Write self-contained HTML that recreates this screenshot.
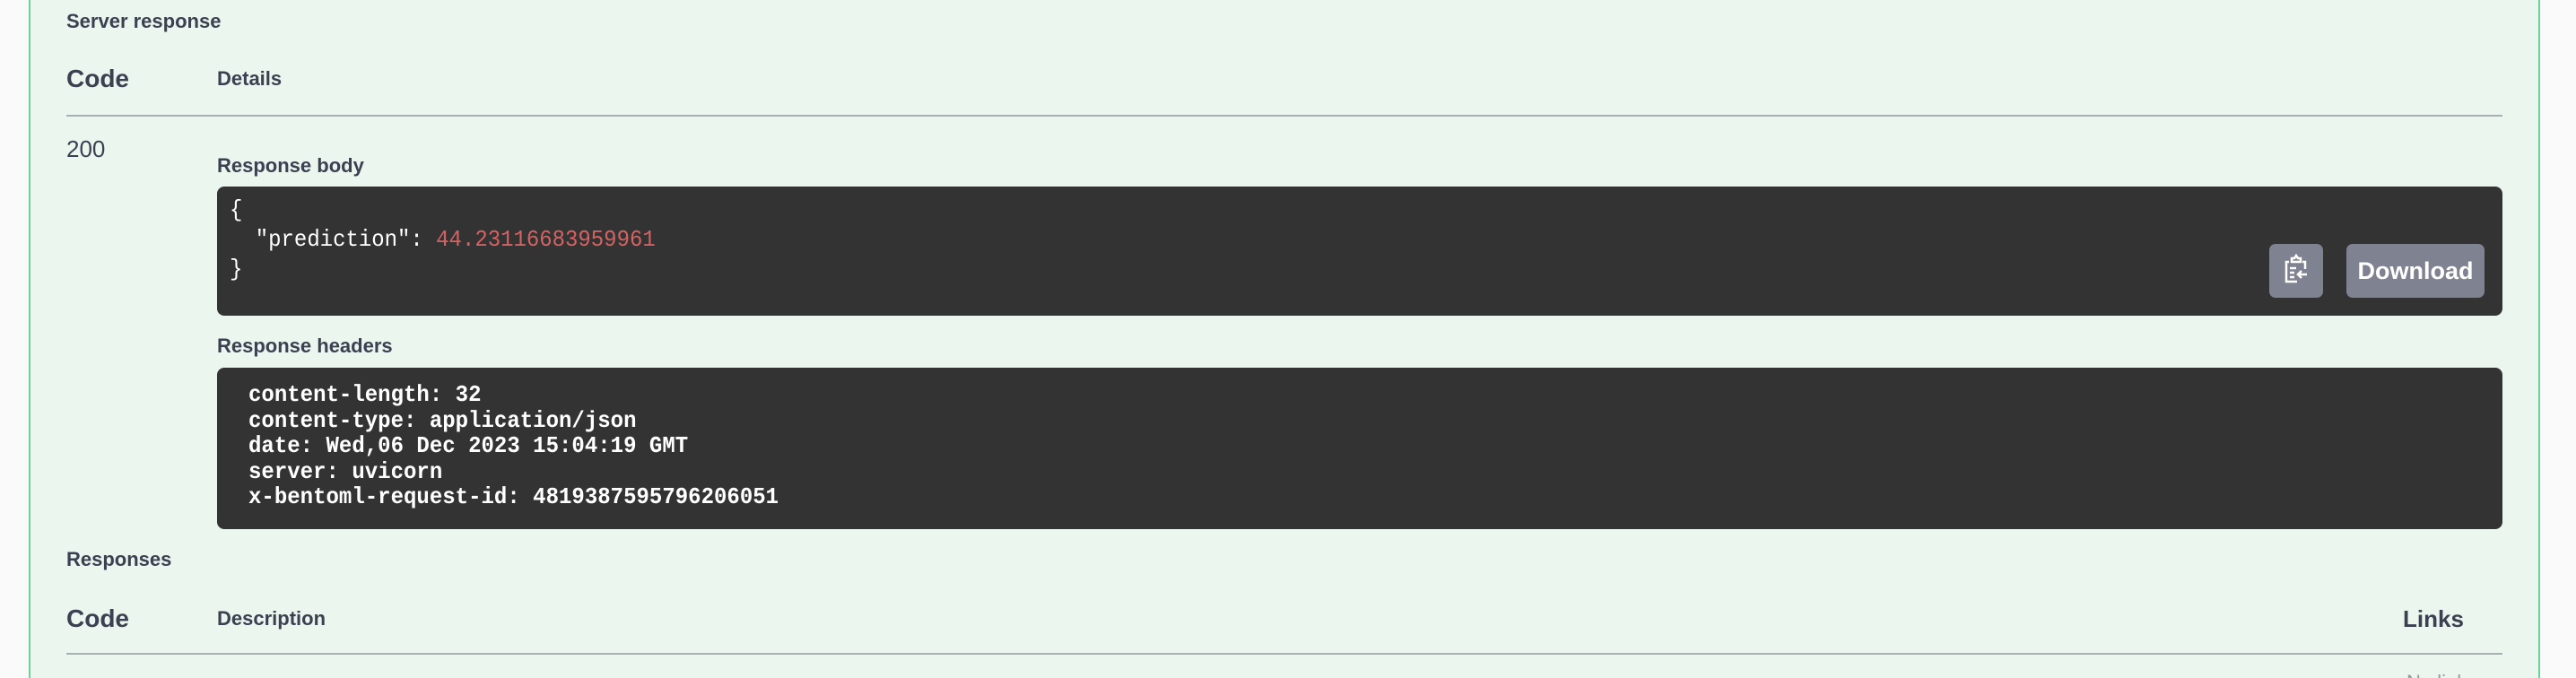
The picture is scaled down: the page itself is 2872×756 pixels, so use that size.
<!DOCTYPE html>
<html style="width:2872px;height:756px;overflow:hidden"><head><meta charset="utf-8"><style>
html,body{margin:0;padding:0}
body{width:2872px;height:756px;background:#fafafa;position:relative;overflow:hidden;font-family:"Liberation Sans",sans-serif;color:#3b4151}
.panel{position:absolute;left:32px;top:-4px;width:2800px;height:764px;background:#ebf6ef;border-left:2px solid #6fcf97;border-right:2px solid #6fcf97;box-sizing:border-box}
.a{position:absolute;white-space:nowrap}
.b{font-weight:bold}
.line{position:absolute;left:74px;width:2716px;height:2px;background:#a9b0b3}
.box{position:absolute;left:242px;width:2548px;background:#333;border-radius:8px}
.mono{font-family:"Liberation Mono",monospace;font-size:26px;color:#fff;white-space:pre;position:absolute;transform-origin:left top}
.btn{position:absolute;background:#7f8391;border-radius:7px;color:#fff;font-weight:bold}
</style></head><body>
<div class="panel"></div>
<div class="a b" style="left:74px;top:11px;font-size:22px">Server response</div>
<div class="a b" style="left:74px;top:72px;font-size:28px">Code</div>
<div class="a b" style="left:242px;top:75px;font-size:22px">Details</div>
<div class="line" style="top:128px"></div>
<div class="a" style="left:74px;top:151px;font-size:26px">200</div>
<div class="a b" style="left:242px;top:172px;font-size:22px">Response body</div>
<div class="box" style="top:208px;height:144px"></div>
<div class="mono" style="left:256px;top:218px;line-height:33px;transform:scaleX(0.922)">{
  "prediction": <span style="color:#d36363">44.23116683959961</span>
}</div>
<div class="btn" style="left:2530px;top:272px;width:60px;height:60px">
<svg width="60" height="60" viewBox="0 0 60 60"><g fill="none" stroke="#fff" stroke-width="2.5"><path d="M22 20h-3v22h12M37 20h3v8"/><path d="M25 20v-4h3l2-3 2 3h3v4z"/><path d="M23 27h7M23 32h5M23 37h5M42 34H32m4-4-4 4 4 4"/></g></svg></div>
<div class="btn" style="left:2616px;top:272px;width:154px;height:60px;font-size:27px;line-height:60px;text-align:center">Download</div>
<div class="a b" style="left:242px;top:373px;font-size:22px">Response headers</div>
<div class="box" style="top:410px;height:180px"></div>
<div class="mono" style="left:277px;top:426px;line-height:28.5px;font-weight:bold;transform:scaleX(0.924)">content-length: 32
content-type: application/json
date: Wed,06 Dec 2023 15:04:19 GMT
server: uvicorn
x-bentoml-request-id: 4819387595796206051</div>
<div class="a b" style="left:74px;top:611px;font-size:22px">Responses</div>
<div class="a b" style="left:74px;top:674px;font-size:28px">Code</div>
<div class="a b" style="left:242px;top:677px;font-size:22px">Description</div>
<div class="a b" style="left:2679px;top:675px;font-size:26px">Links</div>
<div class="line" style="top:728px"></div>
<div class="a" style="left:2683px;top:748px;font-size:22px;color:#999">No links</div>
</body></html>
